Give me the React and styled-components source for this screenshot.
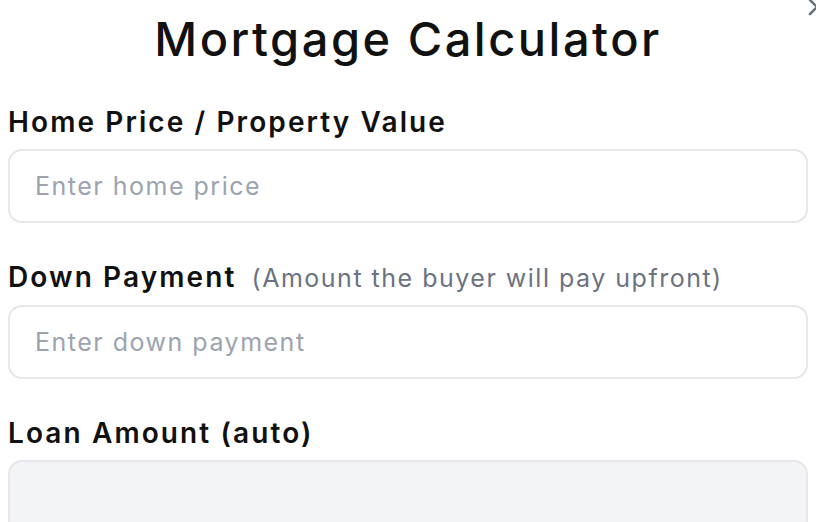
import React from "react";
import styled, { createGlobalStyle } from "styled-components";

const GlobalStyle = createGlobalStyle`
  body {
    margin: 0;
    background: #ffffff;
    font-family: "Inter", "Noto Sans", sans-serif;
    overflow: hidden;
  }
`;

const Modal = styled.div`
  position: relative;
  padding: 0 8px;
`;

const CloseButton = styled.button`
  position: absolute;
  top: -7px;
  right: -15px;
  width: 28px;
  height: 28px;
  padding: 0;
  border: none;
  background: none;
  color: #6b7280;
`;

const Title = styled.h1`
  margin: 0;
  padding-top: 11px;
  text-align: center;
  font-size: 47px;
  line-height: 56px;
  font-weight: 500;
  letter-spacing: 2.5px;
  color: #111111;
`;

const Form = styled.form`
  display: flex;
  flex-direction: column;
  gap: 36px;
  margin-top: 37px;
`;

const Field = styled.div`
  display: flex;
  flex-direction: column;
  gap: 9px;
`;

const Label = styled.label`
  font-size: 28px;
  line-height: 36px;
  font-weight: 600;
  letter-spacing: 2.1px;
  color: #111111;
`;

const Hint = styled.span`
  margin-left: 6px;
  font-weight: 400;
  font-size: 25px;
  letter-spacing: 1.5px;
  color: #6b7280;
`;

const Input = styled.input`
  box-sizing: border-box;
  width: 100%;
  height: 74px;
  padding: 0 25px;
  border: 2px solid #e5e7eb;
  border-radius: 14px;
  background: ${(p) => (p.readOnly ? "#f3f4f6" : "#ffffff")};
  font-family: inherit;
  font-size: 25px;
  letter-spacing: 1.5px;
  color: #111111;
  outline: none;

  &::placeholder {
    color: #9ca3af;
  }
`;

const XIcon = () => (
  <svg width="28" height="28" viewBox="0 0 24 24" fill="none" stroke="currentColor" strokeWidth="2.2" strokeLinecap="round">
    <path d="M18 6 6 18" />
    <path d="M6 6l12 12" />
  </svg>
);

export default function App() {
  return (
    <>
      <GlobalStyle />
      <Modal>
        <CloseButton aria-label="Close">
          <XIcon />
        </CloseButton>
        <Title>Mortgage Calculator</Title>
        <Form>
          <Field>
            <Label htmlFor="price">Home Price / Property Value</Label>
            <Input id="price" placeholder="Enter home price" />
          </Field>
          <Field>
            <Label htmlFor="down">
              Down Payment <Hint>(Amount the buyer will pay upfront)</Hint>
            </Label>
            <Input id="down" placeholder="Enter down payment" />
          </Field>
          <Field>
            <Label htmlFor="loan">Loan Amount (auto)</Label>
            <Input id="loan" readOnly />
          </Field>
        </Form>
      </Modal>
    </>
  );
}
